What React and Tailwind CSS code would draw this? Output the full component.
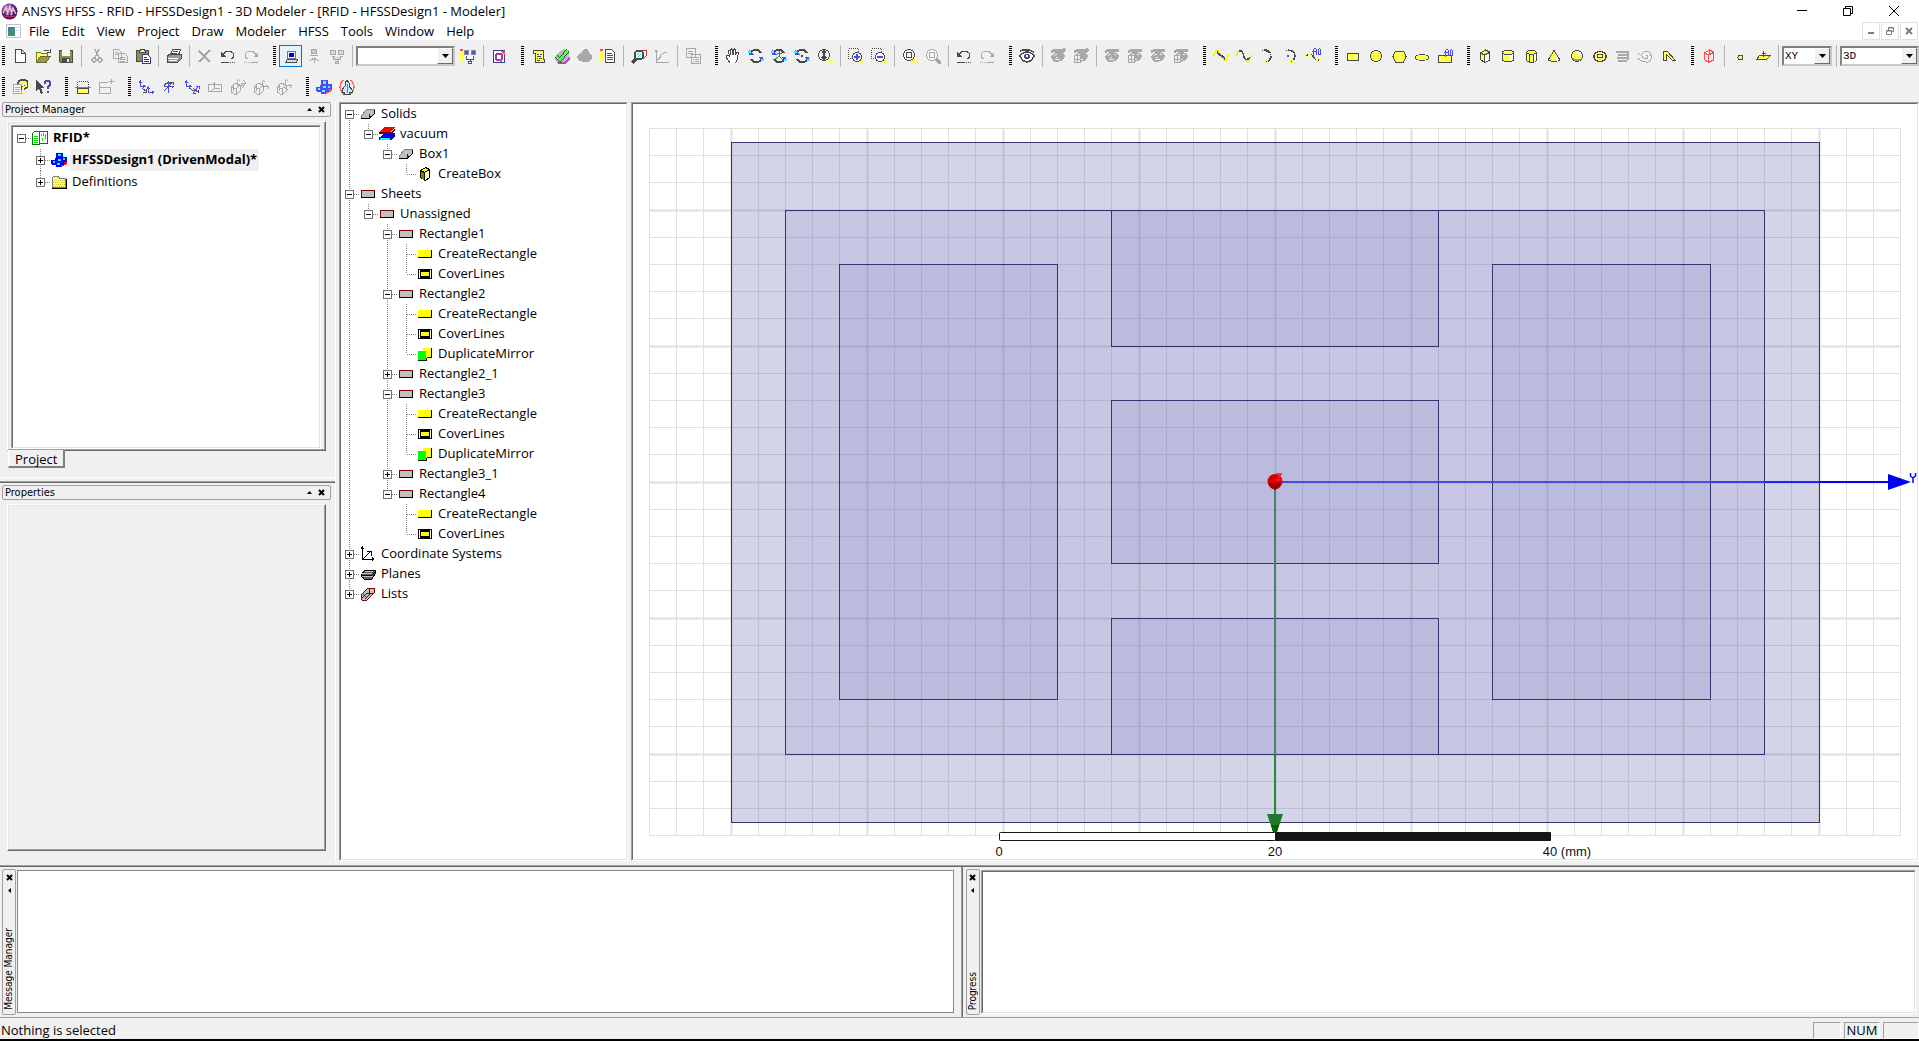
import React, { useState } from 'react';

const D = '#4a4a4a';
const G = '#a8a8a8';
const Y = '#ffff4d';
const B = '#4a4aff';

const maskedEye = (box, slash) => (
    <>
        <path d="M1 3q1-2 5-2h9v3h-3q-5-1-11 1z" fill={G} />
        <path d="M1 9q2-5 7-5t7 4q-1 4-4 5t-6 1q-3-1-4-5z" fill={G} />
        <path d="M4 8q1-2 3-2M10 6h2M6 9h2M5 11h5" stroke="#f0f0f0" fill="none" />
        {slash && <path d="M9 7l6-6" stroke={G} strokeWidth="3" />}
        {box && <path d="M1.500 7.500h6v7h-6zM4.500 7.500v7M1.500 11h6" fill="#f0f0f0" stroke={G} />}
    </>
);

const magnifier = (c, handle) => (
    <>
        <path d="M11 11l5 5" stroke={handle} strokeWidth="3" />
        <circle cx="7" cy="7" r="5.500" fill="#f6f6f6" stroke={c} />
    </>
);

const rotateArrows = (
    <>
        <path d="M2 6q1-4 6-4q4 0 5 3M14 10q-1 4-6 4q-4 0-5-3" fill="none" stroke={D} strokeWidth="2" />
        <path d="M1 2v5h5zM15 14v-5h-5z" fill={B} />
        <path d="M0 3h3v2h-3zM13 11h3v2h-3z" fill="#33eeff" />
    </>
);

const axes = (c, x, y) => (
    <path d={`M${x}.5 ${y}.5v-6M${x}.5 ${y}.5h6M${x - 1}.5 ${y - 4}.5l2-2 2 2M${x + 4}.5 ${y - 1}.5l2 2-2 2`} fill="none" stroke={c} />
);

const cube = (
    <path d="M1 8l4-4 5 2v6l-4 4-5-3zM1 8l5 2 4-4M6 10v6M3 6v6" fill="none" stroke={G} />
);

const icons = {
    new: <path d="M3.500 1.500h6l4 4v8.500h-10zM9.500 1.500v4h4" fill="#fff" stroke={D} />,
    open: (
        <>
            <path d="M1.500 13.500v-9h4l1 1h6v3" fill={Y} stroke="#77772a" />
            <path d="M1.500 14l4-6h10l-4 6z" fill="#99994a" stroke="#66662a" />
            <path d="M9 3q3-2 5 0M15 1v3h-3" fill="none" stroke={D} />
        </>
    ),
    save: (
        <>
            <path d="M1.500 2.500h13v12h-12l-1-1z" fill="#8f8f45" stroke={D} />
            <path d="M4 2h8v6h-8z" fill="#f5f5f5" />
            <path d="M4 10h8v4h-8z" fill={D} />
            <path d="M9 11h2v3h-2z" fill="#eee" />
        </>
    ),
    cut: (
        <>
            <path d="M6 1l4 9M10 1l-4 9" stroke={G} fill="none" strokeWidth="1.500" />
            <circle cx="5" cy="12" r="2" fill="none" stroke={G} strokeWidth="1.500" />
            <circle cx="11" cy="12" r="2" fill="none" stroke={G} strokeWidth="1.500" />
        </>
    ),
    copy: <path d="M1.500 1.500h5l3 3v6h-8zM6.500 5.500h6l3 3v6h-9zM3 4.500h3M3 6.500h3M8 9.500h5M8 11.500h6M8 13h5" fill="#f0f0f0" stroke={G} />,
    paste: (
        <>
            <path d="M1.500 2.500h12v11h-12z" fill="#8f8f45" stroke={D} />
            <path d="M4.500 4.500h6l-1-3h-4z" fill={Y} stroke={D} />
            <path d="M7.500 6.500h5l3 3v6h-8zM9 9.500h3M9 11.500h5M9 13.500h5" fill="#fff" stroke="#3a3a90" />
        </>
    ),
    print: (
        <>
            <path d="M4.500 7l2-5.500h8l-2 5.500" fill="#fff" stroke={D} />
            <path d="M1 8l3-2h11v5l-3 3H1z" fill="#999" stroke={D} />
            <path d="M2 10.500h10M3 12.500h8" stroke="#fff" />
            <path d="M7 3.500h5M6 5.500h5" stroke={D} />
        </>
    ),
    del: <path d="M2 3l11 11M13 2L2 14" stroke={G} strokeWidth="2" fill="none" />,
    undo: (
        <>
            <path d="M3 8q1-5 6-5q5 1 5 5q-1 2-3 3" fill="none" stroke={D} />
            <path d="M1 4v5h5z" fill={D} />
            <path d="M1 14h8v1h-8zM10 14h1v1h-1zM12 14h1v1h-1zM14 14h1v1h-1z" fill={D} />
        </>
    ),
    redo: (
        <>
            <path d="M13 8q-1-5-6-5q-5 1-5 5q1 2 3 3" fill="none" stroke={G} />
            <path d="M15 4v5h-5z" fill={G} />
            <path d="M7 14h8v1h-8zM1 14h1v1h-1zM3 14h1v1h-1zM5 14h1v1h-1z" fill={G} />
        </>
    ),
    local: (
        <>
            <path d="M4.500 3.500h8v7h-8z" fill="#f4f4f4" stroke="#777" />
            <path d="M6 5h5v4h-5z" fill="#0000c8" />
            <path d="M2.500 14.500l2-3h10l-1 3z" fill="#ddd" stroke={D} />
        </>
    ),
    remote: <path d="M5.500 1.500h5v4h-5zM4 7.500h8M8.500 10v5M5 12l3-2 3 2M3 13l2-1M13 13l-2-1" fill="#c8c8c8" stroke={G} />,
    distributed: <path d="M1.500 2.500h5v4h-5zM9.500 2.500h5v4h-5zM3 8.500h3M11 8.500h3M4.500 9v2.500h7v-2.500M8.500 11v2M6.500 13.500h3v2h-3z" fill="#d8d8d8" stroke={G} />,
    pencilPcs: (
        <>
            <path d="M0 2h3v10l-1.500 3-1.500-3z" fill={Y} />
            <path d="M0 1h3v2h-3z" fill="#ff4d4d" />
            <path d="M4.500 2.500h4v4h-4zM11.500 2.500h4v4h-4z" fill={B} stroke="#8a8aa0" />
            <path d="M6.500 8v3.500h7v-3.500M10.500 11v2M8.500 13.500h3v2h-3z" fill="#fff" stroke="#4a4a90" />
        </>
    ),
    queue: (
        <>
            <path d="M2.500 2.500h11v12h-11z" fill="#fff" stroke="#3c3c90" />
            <path d="M3 3h6l5 5v-5z" fill="#ff4d4d" />
            <path d="M6 6h4l1 1v4l-1 1h-4l-1-1v-4z" fill="#fff" stroke="#a040a0" strokeWidth="2" />
            <path d="M9 11h2v3h-2z" fill="#ff4d4d" />
        </>
    ),
    scroll: (
        <>
            <path d="M2.500 2.500h10v9h1v3h-9v-9h-2z" fill={Y} stroke={D} />
            <path d="M6 6.500h2M9 6.500h2M6 8.500h4M6 10.500h1M8 10.500h3M6 12.500h3" stroke={D} />
        </>
    ),
    validate: (
        <>
            <path d="M1 9l5-6 4-2 5 3v8l-5 4-8-2z" fill="#b9b9c6" />
            <path d="M2 14h8l6-5v3l-5 4h-7z" fill="#b04ab0" />
            <path d="M2 8l4 4 8-10" fill="none" stroke={D} strokeWidth="4" />
            <path d="M2 8l4 4 8-10" fill="none" stroke="#4dff4d" strokeWidth="2.500" />
        </>
    ),
    analyze: <path d="M5 3l2-2h4l1 4 3 2v4l-4 3h-5l-5-2-1-4 3-3h2z" fill={G} />,
    notes: (
        <>
            <path d="M0 2h3v12h-3z" fill={Y} />
            <path d="M0 1h3v2h-3z" fill="#ff4d4d" />
            <path d="M5.500 1.500h6l3 3v10h-9z" fill="#fff" stroke={D} />
            <path d="M7 5.500h5M7 7.500h6M7 9.500h6M7 11.500h6" stroke="#4a4a90" />
        </>
    ),
    inspect: (
        <>
            <path d="M11 2h4v6l-3 3" fill="#fff" stroke="#b33" />
            <path d="M5 11l-4 4" stroke={D} strokeWidth="3" />
            <circle cx="8" cy="7" r="4.500" fill="#dffcff" stroke={D} strokeWidth="2" />
            <path d="M6 7l2-2M7 9l3-3" stroke="#33dddd" />
        </>
    ),
    plot: <path d="M2.500 2v12.500h12M3 12q3-1 4-5q2-3 6-2M1 4l1-2 2 2" fill="none" stroke={G} />,
    report: <path d="M1.500 .5h9v9h-9zM6.500 6.500h9v9h-9zM3 3.500h5M3 5.500h5M8 9.500h1M10 9.500h4M8 11.500h1M10 11.500h4M8 13.500h1M10 13.500h4" fill="#f0f0f0" stroke={G} />,
    pan: <path d="M5 15l-4-6v-2h2l2 2-2-6 1-1 1 1 1 4-.5-5 1-1 1 1 .5 5 .5-5 1-1 1 1v5l1-3 2 0-1 7-2 4" fill="#fff" stroke={D} />,
    rotate: rotateArrows,
    rotateAxis: (
        <>
            {rotateArrows}
            <path d="M8.500 9V3M6 5.500h5" stroke="#d33" />
            <path d="M8 8l-5 4" stroke="#3a3" />
            <path d="M8 8l4 4" stroke={B} />
        </>
    ),
    rotateScreen: (
        <>
            {rotateArrows}
            <circle cx="8" cy="8" r="1.500" fill={D} />
        </>
    ),
    zoom: (
        <>
            {magnifier(D, Y)}
            <path d="M7 3v8M5 5l2-2 2 2M5 9l2 2 2-2" fill="none" stroke={D} strokeWidth="1.500" />
        </>
    ),
    zoomIn: (
        <>
            <path d="M.5 .5h10v10h-10z" fill="none" stroke={D} strokeDasharray="1 1" />
            <path d="M12 12l4 4" stroke={Y} strokeWidth="3" />
            <circle cx="9" cy="9" r="4.500" fill="#fff" stroke={D} />
            <path d="M9 6v6M6 9h6" stroke={B} strokeWidth="2" />
        </>
    ),
    zoomOut: (
        <>
            <path d="M.5 .5h10v10h-10z" fill="none" stroke={D} strokeDasharray="1 1" />
            <path d="M12 12l4 4" stroke={Y} strokeWidth="3" />
            <circle cx="9" cy="9" r="4.500" fill="#fff" stroke={D} />
            <path d="M6 9h6" stroke={B} strokeWidth="2" />
        </>
    ),
    fitAll: (
        <>
            {magnifier(D, Y)}
            <path d="M4.500 4.500h5v5h-5z" fill="none" stroke={D} />
        </>
    ),
    fitSel: (
        <>
            {magnifier(G, G)}
            <path d="M4.500 4.500h5v5h-5z" fill="none" stroke={G} />
        </>
    ),
    eye: (
        <>
            <path d="M1 3q7-3 14 1" fill="none" stroke={D} strokeWidth="1.500" />
            <path d="M1 8q3-4 7-4t7 4q-3 6-7 6t-7-6z" fill="#fff" stroke={D} strokeWidth="1.500" />
            <circle cx="8" cy="8.500" r="3" fill="#4a4a90" />
            <path d="M7 7h2v2h-2z" fill="#fff" />
        </>
    ),
    hideSel: maskedEye(false, true),
    hideSelView: maskedEye(true, true),
    showSel: maskedEye(false, false),
    showSelView: maskedEye(true, false),
    line: (
        <>
            <path d="M4 4l8 7" stroke={D} strokeWidth="2" />
            <path d="M0 6h2v2h-2zM1 4h2v2h-2zM2 2h4v1h-4zM5 3h1v2h-1zM10 10h1v3h-1zM11 12h3v1h-3zM13 10h2v2h-2zM14 6h2v3h-2z" fill="#f4f400" />
        </>
    ),
    spline: (
        <>
            <path d="M1 6q2-4 4-3q2 1 3 6q2 5 7 0" fill="none" stroke={D} strokeWidth="1.500" />
            <path d="M0 5h2v3h-2zM1 3h2v2h-2zM3 1h3v1h-3zM10 12h4v2h-4zM14 7h2v3h-2z" fill="#f4f400" />
        </>
    ),
    arc: (
        <>
            <path d="M4 2q8 0 8 6q-1 5-4 6" fill="none" stroke={D} strokeWidth="2" />
            <path d="M2 1h3v3h-3zM10 5h3v3h-3zM6 12h3v3h-3z" fill={Y} />
            <path d="M3 2h1v1h-1zM11 6h1v1h-1zM7 13h1v1h-1z" fill={D} />
        </>
    ),
    arcCenter: (
        <>
            <path d="M5 2q8 0 8 6q-1 5-4 6" fill="none" stroke={D} strokeWidth="1.500" />
            <path d="M3 1h3v3h-3zM8 12h4v3h-4z" fill={Y} />
            <path d="M4 2h1v1h-1zM9 13h1v1h-1z" fill={D} />
            <path d="M5 7h2v2h-2z" fill={B} />
        </>
    ),
    eqCurve: (
        <>
            <path d="M1 9q2-4 5-3l5 6q2 1 4-1" fill="none" stroke={D} />
            <path d="M0 8h2v3h-2zM3 5h3v2h-3zM11 12h2v2h-2zM14 10h2v3h-2z" fill={Y} />
            <path d="M10.500 .5h-1l-1 1v6M7 3.500h4M11.500 1v6M14.500 .5l1 1v4l-1 2M13.500 1v6" fill="none" stroke={B} />
        </>
    ),
    rect: <path d="M2.500 5.500h11v7h-11z" fill={Y} stroke={D} />,
    circle: <circle cx="8" cy="8" r="5.500" fill={Y} stroke={D} />,
    polygon: <path d="M4.500 3h8l2.500 5.500-2.500 5.500h-8l-2.500-5.500z" fill={Y} stroke={D} />,
    ellipse: <ellipse cx="8" cy="9.500" rx="6.500" ry="3" fill={Y} stroke={D} />,
    eqSurface: (
        <>
            <path d="M1.500 7.500h13v7h-13z" fill={Y} stroke={D} />
            <path d="M10.500 1.500h-1l-1 1v6M7 4.500h4M11.500 2v6M14.500 1.500l1 1v4l-1 2M13.500 2v6" fill="none" stroke={B} />
        </>
    ),
    box: (
        <>
            <path d="M3.500 5l5-3 4 2v8l-5 2.500-4-3z" fill={Y} stroke={D} />
            <path d="M8 7l4-2v7l-4 2z" fill="#fff" />
            <path d="M3.500 5l4 2 5-2.500M7.500 7v7.500" fill="none" stroke={D} />
        </>
    ),
    cylinder: (
        <>
            <path d="M2.500 4.500v8q5 3 11 0v-8" fill={Y} stroke={D} />
            <path d="M10 6h3v6h-3z" fill="#fff" />
            <ellipse cx="8" cy="4.500" rx="5.500" ry="2" fill={Y} stroke={D} />
        </>
    ),
    prism: (
        <>
            <path d="M3.500 4.500v8l3 2h4l3-2v-8l-2-2h-6z" fill={Y} stroke={D} />
            <path d="M11 6h2v6l-2 2z" fill="#fff" />
            <path d="M3.500 4.500l3 2h4l3-2M6.500 6.500v8M10.500 6.500v8" fill="none" stroke={D} />
        </>
    ),
    cone: (
        <>
            <path d="M8 2.500l6 9.500q-6 3-12 0z" fill={Y} stroke={D} />
            <path d="M9 5l4 7-3 1z" fill="#fff" />
        </>
    ),
    sphere: (
        <>
            <circle cx="8" cy="8" r="5.500" fill={Y} stroke={D} />
            <path d="M4 12q4 2 8 0l1-2q-5 3-9 0z" fill="#999" />
            <path d="M9 4h3v3h-3z" fill="#fff" />
        </>
    ),
    torus: (
        <>
            <ellipse cx="8" cy="8.500" rx="6" ry="5" fill={Y} stroke={D} strokeWidth="1.500" />
            <path d="M5.500 6.500h5v3h-5z" fill="#fff" stroke={D} />
        </>
    ),
    helix: <path d="M1 4h11M3 7h11M2 10h12M3 13h9M13 3v9" stroke={G} strokeWidth="2" fill="none" />,
    spiral: <path d="M8 8q2-2 2 1t-4 1t-1-5t6-1t2 7t-9 2t-2-8" fill="none" stroke={G} />,
    bondwire: <path d="M2.500 12.500v-9h4l8 9h-3l-6-6v6z" fill={Y} stroke={D} />,
    redCube: <path d="M3.500 5l5-3 4 2v8l-5 2.500-4-3zM3.500 5l4 2 5-2.500M7.500 7v7.500M8.500 2v4" fill="none" stroke="#ff4d4d" />,
    point: <circle cx="8.500" cy="9.500" r="2.500" fill={Y} stroke={D} />,
    plane: (
        <>
            <path d="M4.500 7.500h11l-4 4h-10z" fill={Y} stroke={D} />
            <path d="M8.500 3v6M7 5.500h4" stroke={D} />
        </>
    ),
    help: (
        <>
            <path d="M1.500 5.500h8v9h-8zM3 8.500h5M3 10.500h5M3 12.500h5" fill="#fff" stroke={G} />
            <path d="M7 5q0-3 4-3t4 3q0 3-4 4v2" fill="none" stroke={D} strokeWidth="4" />
            <path d="M7.500 5q0-2.500 3.500-2.500t3.500 2.500q0 2.500-3.500 3.500v2M11 13v2" fill="none" stroke={Y} strokeWidth="2" />
        </>
    ),
    contextHelp: (
        <>
            <path d="M1 1v11l3-2 2 5 2-1-2-5h4z" fill={D} />
            <path d="M9.500 5q0-3 3-3t3 3q-1 2-3 3v2M12.500 12v2" fill="none" stroke="#4a4aa8" strokeWidth="2" />
        </>
    ),
    clip: (
        <>
            <path d="M2.500 7.500v-5h11v5" fill="none" stroke={D} strokeDasharray="1 1" />
            <path d="M2.500 9.500h11v5h-11z" fill={Y} stroke={D} />
            <path d="M0 8.500h16" stroke="#3cb43c" />
        </>
    ),
    clipAdd: <path d="M1.500 8v-4.500h8M1.500 8.500h11v6h-11zM13.500 0v5M11 2.500h5" fill="none" stroke={G} />,
    csMove: (
        <>
            <path d="M2.500 8V2M2 7.500h5M1 4l1.500-2 1.500 2M5 6l2 1.500-2 1.500" fill="none" stroke={B} />
            <path d="M10.500 14V8M10 13.500h6M9 10l1.500-2 1.500 2M14 12l2 1.500-2 1.500" fill="none" stroke={B} />
            <path d="M4 9l5 4M8 10v3h-3" fill="none" stroke={D} />
        </>
    ),
    csRotate: (
        <>
            <path d="M7.500 14V3M3 7.500h10M6 5l1.500-2 1.500 2" fill="none" stroke={B} strokeWidth="1.500" />
            <path d="M3 12l9-9M12 6v-3h-3M11 9l2-2M5 4l-2 3" fill="none" stroke={D} />
        </>
    ),
    csBoth: (
        <>
            <path d="M2.500 8V2M2 7.500h5M1 4l1.500-2 1.500 2M5 6l2 1.500-2 1.500" fill="none" stroke={B} />
            <path d="M9 9l6 5M15 7l-6 7M12 7h3v3" stroke={B} fill="none" />
            <path d="M5 9l5 3M9 14h3M14 11v3" stroke={D} fill="none" />
        </>
    ),
    csFace: <path d="M1.500 5.500h13v7h-13zM7.500 9.500v-5M7.500 9.500h5M7.500 9.500l-3 2M6 6l1.500-2 1.500 2" fill="none" stroke={G} />,
    csObj: <>{cube}{axes(G, 7, 6)}<path d="M11 4h5M13 1l3 3-2 2" stroke={G} fill="none" /></>,
    csObjMove: <>{cube}{axes(G, 9, 7)}</>,
    csObjBoth: <>{cube}{axes(G, 9, 6)}<path d="M7 8l5 3" stroke={G} /></>,
    hfss: (
        <>
            <path d="M3 11l3 4h4l6-3v-3l-4-1z" fill="#ff4d4d" />
            <path d="M5 1h7v4h3l1 1v4h-3v3h-3v2h-5v-2h-4l-1-1v-4h4l1-3z" fill={B} />
            <path d="M7 2h3v3h-3zM2 9h2v2h-2zM7 7h3v2h-3zM12 7h2v2h-2zM6 11h3v2h-3z" fill="#4dffff" />
        </>
    ),
    antenna: (
        <>
            <path d="M4 1q-6 7 0 14M12 1q6 7 0 14" stroke="#ff6a4d" strokeWidth="1.500" fill="none" />
            <path d="M8 1l2 3v3l3 4v2h-3l1 2h-6l1-2h-3v-2l3-4v-3z" fill="#c8e8ff" stroke={D} />
            <path d="M8.500 5v9" stroke="#4a8ac8" />
        </>
    ),
};

const toolbarRows = [
    [
        ['new', 'open', 'save', '|', 'cut', 'copy', 'paste', '|', 'print', '|', 'del', 'undo', 'redo'],
        ['local*', 'remote', 'distributed', '|', 'combo', 'pencilPcs', '|', 'queue'],
        ['scroll', 'validate', 'analyze', 'notes', '|', 'inspect', 'plot', '|', 'report'],
        ['pan', 'rotate', 'rotateAxis', 'rotateScreen', 'zoom', '|', 'zoomIn', 'zoomOut', '|', 'fitAll', 'fitSel', '|', 'undo', 'redo'],
        ['eye', '|', 'hideSel', 'hideSelView', '|', 'showSel', 'showSelView', 'showSel', 'showSelView'],
        ['line', 'spline', 'arc', 'arcCenter', 'eqCurve'],
        ['rect', 'circle', 'polygon', 'ellipse', 'eqSurface'],
        ['box', 'cylinder', 'prism', 'cone', 'sphere', 'torus', 'helix', 'spiral', 'bondwire'],
        ['redCube', '|', 'point', 'plane', '|', 'planeSelect', '|', 'dimSelect'],
    ],
    [
        ['help', 'contextHelp'],
        ['clip', 'clipAdd'],
        ['csMove', 'csRotate', 'csBoth', 'csFace', 'csObj', 'csObjMove', 'csObjBoth'],
        ['hfss', 'antenna'],
    ],
];

const menus = ['File', 'Edit', 'View', 'Project', 'Draw', 'Modeler', 'HFSS', 'Tools', 'Window', 'Help'];

const op = (label, icon) => ({ label, icon });
const rectangle = (label, mirrored) => ({
    label,
    icon: 'sheet',
    children: [
        op('CreateRectangle', 'createRect'),
        op('CoverLines', 'cover'),
        ...(mirrored ? [op('DuplicateMirror', 'mirror')] : []),
    ],
});

const modelTree = [
    {
        label: 'Solids',
        icon: 'solid',
        children: [
            {
                label: 'vacuum',
                icon: 'material',
                children: [{ label: 'Box1', icon: 'solid', children: [op('CreateBox', 'createBox')] }],
            },
        ],
    },
    {
        label: 'Sheets',
        icon: 'sheet',
        children: [
            {
                label: 'Unassigned',
                icon: 'sheet',
                children: [
                    rectangle('Rectangle1', false),
                    rectangle('Rectangle2', true),
                    { label: 'Rectangle2_1', icon: 'sheet', closed: true },
                    rectangle('Rectangle3', true),
                    { label: 'Rectangle3_1', icon: 'sheet', closed: true },
                    rectangle('Rectangle4', false),
                ],
            },
        ],
    },
    { label: 'Coordinate Systems', icon: 'cs', closed: true },
    { label: 'Planes', icon: 'planes', closed: true },
    { label: 'Lists', icon: 'lists', closed: true },
];

const projectTree = [
    {
        label: 'RFID*',
        icon: 'project',
        bold: true,
        children: [
            { label: 'HFSSDesign1 (DrivenModal)*', icon: 'design', bold: true, active: true, closed: true },
            { label: 'Definitions', icon: 'folder', closed: true },
        ],
    },
];

const treeIcons = {
    solid: (
        <>
            <path d="M1.500 12.500v-3l5-6h8v4l-5 5z" fill="#c0c0c0" stroke="#808080" />
            <path d="M1 12.500h8l5.500-5v-4" fill="none" stroke="#000" />
            <path d="M9.500 12v-4" fill="none" stroke="#800000" />
        </>
    ),
    material: (
        <>
            <path d="M1 5l4-4h11l-4 5h-11z" fill="#f00" />
            <path d="M0 6h12l4-4v2l-4 4h-12z" fill="#600000" />
            <path d="M1 11l4-4h11l-4 4z" fill="#00f" />
            <path d="M0 11h12l4-4v3l-4 4h-12z" fill="#000080" />
            <path d="M1 11.500h10v2h-10z" fill="#0ff" />
        </>
    ),
    sheet: (
        <>
            <path d="M1.500 4.500h13v7h-13z" fill="#c0c0c0" stroke="#800000" />
            <path d="M1 11.500h13.500v-7" fill="none" stroke="#000" />
        </>
    ),
    createRect: (
        <>
            <path d="M1 4h13v7h-13z" fill="#ff0" />
            <path d="M1 11.500h13.500v-8" fill="none" stroke="#000" />
        </>
    ),
    cover: (
        <>
            <path d="M1.500 3.500h13v9h-13z" fill="#fff" stroke="#000" />
            <path d="M3 4.500h10M3 11.500h10" stroke="#000" />
            <path d="M3.500 5.500h9v5h-9z" fill="#ff0" stroke="#000" />
        </>
    ),
    mirror: (
        <>
            <path d="M6 2h8v9h-8z" fill="#ff0" />
            <path d="M14.500 2v9.500h-5" fill="none" stroke="#000" />
            <path d="M1 5h8v9h-8z" fill="#0f0" />
            <path d="M1 14.500h8.500v-3" fill="none" stroke="#000" />
        </>
    ),
    createBox: (
        <>
            <path d="M3.500 4.500l5-3 4 2v8l-4 3-5-3z" fill="#ff0" stroke="#000" />
            <path d="M4 5l3 2v7l-3-2z" fill="#808000" />
            <path d="M8 7l4-2v6l-4 3z" fill="#ffffc0" />
            <path d="M3.500 4.500l4 2 5-3M7.500 6.500v8" fill="none" stroke="#000" />
        </>
    ),
    cs: <path d="M2.500 1v12.500h11M1 3l1.500-2 1.500 2M12 11.500l2 1.500-2 1.500M3 13l7-7M7 5.500h4.500v4" fill="none" stroke="#000" />,
    planes: (
        <>
            <path d="M1 9l4-5h10v4l-3 5h-8z" fill="#606060" stroke="#000" />
            <path d="M2 7.500h10M2 10.500h11M5 5.500h8" stroke="#c0c0c0" />
            <path d="M1 9h11l3-3" stroke="#000" fill="none" />
        </>
    ),
    lists: (
        <>
            <path d="M1 9l7-7h6v5l-7 7h-5z" fill="#c0c0c0" stroke="#800000" />
            <path d="M2 12l5-5h3M5 13l6-6M9 3v4h5M3 8l3 3" fill="none" stroke="#800000" />
        </>
    ),
    project: (
        <>
            <path d="M5.500 1.500h10v12h-10z" fill="#fff" stroke="#008000" />
            <path d="M.5 3.500l2-2h5v13h-7z" fill="#fff" stroke="#008000" />
            <path d="M2 6.500h4M2 8.500h4M2 10.500h4M2 12.500h4M9.500 4v2M11.500 3v3M13.500 4v5M10.500 8v3" stroke="#00e000" fill="none" />
        </>
    ),
    design: (
        <>
            <path d="M3 11l3 4h4l6-3v-3l-4-1z" fill="#f00" />
            <path d="M5 1h7v4h3l1 1v4h-3v3h-3v2h-5v-2h-4l-1-1v-4h4l1-3z" fill="#00f" />
            <path d="M7 2h3v2h-3zM2 9h2v2h-2zM7 7h3v2h-3zM12 6h2v2h-2zM6 11h3v2h-3z" fill="#0ff" />
        </>
    ),
    folder: (
        <>
            <path d="M1.500 13.500v-10l1-1h5l1 2h6v9z" fill="#ffff66" stroke="#808080" />
            <path d="M1 14.500h14.500v-10" fill="none" stroke="#000" />
            <path d="M3 6.500h11M2 8.500h11M3 10.500h11M2 12.500h11" stroke="#d0c040" strokeDasharray="1 1" />
        </>
    ),
};

const Glyph = ({ children }) => (
    <svg width="16" height="16" viewBox="0 0 16 16" className="shrink-0" shapeRendering="crispEdges">
        {children}
    </svg>
);

/* Two pixel bevels used all over the window */
const Sunken = ({ className = '', children }) => (
    <div className={`flex border border-t-[#a0a0a0] border-l-[#a0a0a0] border-r-white border-b-white ${className}`}>
        <div className="flex-1 min-w-0 min-h-0 border border-t-[#696969] border-l-[#696969] border-r-[#e3e3e3] border-b-[#e3e3e3] bg-white overflow-hidden">
            {children}
        </div>
    </div>
);

const Raised = ({ className = '', children }) => (
    <div className={`flex border border-t-white border-l-white border-r-[#696969] border-b-[#696969] ${className}`}>
        <div className="flex flex-1 min-w-0 min-h-0 border border-t-[#e3e3e3] border-l-[#e3e3e3] border-r-[#a0a0a0] border-b-[#a0a0a0]">
            {children}
        </div>
    </div>
);

const Combo = ({ label, options, className }) => (
    <div className={`relative h-5 shrink-0 border-2 border-t-[#808080] border-l-[#808080] border-r-[#c8c8c8] border-b-[#c8c8c8] bg-white ${className}`}>
        <select aria-label={label} className="block w-full h-full appearance-none bg-white pl-px font-['Liberation_Mono',monospace] text-[11px] leading-4 outline-none">
            {options.map((o) => <option key={o}>{o}</option>)}
        </select>
        <span className="absolute right-0 top-0 bottom-0 w-4 flex items-center justify-center pointer-events-none bg-[#f0f0f0] border border-t-white border-l-white border-r-[#696969] border-b-[#696969]">
            <svg width="7" height="4" viewBox="0 0 7 4"><path d="M0 0h7L3.500 4z" /></svg>
        </span>
    </div>
);

const ToolItem = ({ name }) => {
    if (name === '|') return <span className="w-2 flex justify-center"><span className="w-px h-[22px] bg-[#b4b4b4]" /></span>;
    if (name === 'combo') return <Combo label="Queue" options={['']} className="w-[99px] mr-px" />;
    if (name === 'planeSelect') return <Combo label="Drawing plane" options={['XY', 'YZ', 'XZ']} className="w-[50px]" />;
    if (name === 'dimSelect') return <Combo label="Movement mode" options={['3D', 'In Plane']} className="w-[79px]" />;
    const pressed = name.endsWith('*');
    const key = pressed ? name.slice(0, -1) : name;
    return (
        <button
            type="button"
            aria-label={key}
            aria-pressed={pressed}
            className={`w-[23px] h-[22px] shrink-0 flex items-center justify-center ${pressed ? 'bg-[#e5f1fb] border border-[#0078d7]' : 'hover:bg-[#e0eef9]'}`}
        >
            <Glyph>{icons[key]}</Glyph>
        </button>
    );
};

const Grip = () => (
    <span className="w-2 h-5 shrink-0 flex flex-col gap-px pl-0.5">
        {Array.from({ length: 10 }, (_, i) => <span key={i} className="w-[3px] h-px bg-black" />)}
    </span>
);

const Toolbars = () => (
    <div className="bg-[#f0f0f0]">
        {toolbarRows.map((groups, r) => (
            <div key={r} className="h-[31px] flex items-center gap-[9px] overflow-hidden">
                {groups.map((items, g) => (
                    <div key={g} role="toolbar" className="flex items-center shrink-0">
                        <Grip />
                        {items.map((name, i) => <ToolItem key={i} name={name} />)}
                    </div>
                ))}
            </div>
        ))}
    </div>
);

const Guide = ({ height, up, down, across, sign }) => {
    const mid = height / 2;
    return (
        <svg width="19" height={height} className="shrink-0" shapeRendering="crispEdges">
            <g stroke="#808080" strokeDasharray="1 1" fill="none">
                {up && <path d={`M8.500 0V${mid}`} />}
                {down && <path d={`M8.500 ${mid}V${height}`} />}
                {across && <path d={`M9 ${mid + 0.5}H19`} />}
            </g>
            {sign && (
                <>
                    <rect x="4.500" y={mid - 3.5} width="8" height="8" fill="#fff" stroke="#707070" />
                    <path d={`M6 ${mid + 0.5}h5${sign === '+' ? `M8.500 ${mid - 2}v5` : ''}`} stroke="#000" />
                </>
            )}
        </svg>
    );
};

const TreeRows = ({ nodes, height, rails = [] }) =>
    nodes.map((node, i) => {
        const last = i === nodes.length - 1;
        const sign = node.closed ? '+' : node.children ? '-' : null;
        return (
            <React.Fragment key={node.label}>
                <li className={`flex items-center ${height === 22 ? 'h-[22px]' : 'h-5'}`}>
                    {rails.map((on, r) => <Guide key={r} height={height} up={on} down={on} />)}
                    <Guide height={height} up={rails.length > 0 || i > 0} down={!last} across sign={sign} />
                    <span className="w-[19px] shrink-0"><Glyph>{treeIcons[node.icon]}</Glyph></span>
                    <span className={`px-0.5 pb-0.5 h-full flex items-center whitespace-nowrap text-[13px] ${node.bold ? 'font-bold' : ''} ${node.active ? 'bg-[#efefef]' : ''}`}>
                        {node.label}
                    </span>
                </li>
                {node.children && <TreeRows nodes={node.children} height={height} rails={[...rails, !last]} />}
            </React.Fragment>
        );
    });

const closeGlyph = <svg width="7" height="7" viewBox="0 0 7 7"><path d="M1 1l5 5M6 1L1 6" stroke="#000" strokeWidth="2" /></svg>;

const PanelHeader = ({ title }) => (
    <div className="h-[15px] shrink-0 ml-0.5 mr-1 pl-0.5 pr-[5px] flex items-center gap-1.5 border border-[#a0a0a0] rounded-xs font-['DejaVu_Sans_Condensed','DejaVu_Sans',sans-serif] text-[11px]">
        <h2 className="flex-1">{title}</h2>
        <button type="button" aria-label={`Collapse ${title}`}>
            <svg width="5" height="3" viewBox="0 0 5 3"><path d="M0 3h5L2.500 0z" /></svg>
        </button>
        <button type="button" aria-label={`Close ${title}`}>{closeGlyph}</button>
    </div>
);

const SideStrip = ({ title }) => (
    <div className="w-[14px] shrink-0 flex flex-col items-center gap-[7px] pt-1 pb-1 border border-[#a0a0a0] rounded-xs font-['DejaVu_Sans_Condensed','DejaVu_Sans',sans-serif] text-[10px]">
        <button type="button" aria-label={`Close ${title}`}>{closeGlyph}</button>
        <button type="button" aria-label={`Collapse ${title}`}>
            <svg width="3" height="5" viewBox="0 0 3 5"><path d="M3 0v5L0 2.500z" /></svg>
        </button>
        <h2 className="mt-auto [writing-mode:vertical-rl] rotate-180 leading-3 whitespace-nowrap">{title}</h2>
    </div>
);

// Drawing scale: 13.6 px per mm, origin is the centre of the plate
const MM = 13.6;
const CX = 642;
const CY = 378;

const plates = [
    { y: -40, z: -25, w: 80, h: 50, fill: '#5353a3', alpha: 0.25 },
    { y: -36, z: -20, w: 72, h: 40, fill: '#5050b0', alpha: 0.09 },
    { y: -32, z: -16, w: 16, h: 32, fill: '#5a5abb', alpha: 0.1 },
    { y: 16, z: -16, w: 16, h: 32, fill: '#5a5abb', alpha: 0.1 },
    { y: -12, z: -20, w: 24, h: 10, fill: '#5a5abb', alpha: 0.1 },
    { y: -12, z: -6, w: 24, h: 12, fill: '#5a5abb', alpha: 0.1 },
    { y: -12, z: 10, w: 24, h: 10, fill: '#5a5abb', alpha: 0.1 },
];

const px = (v) => Math.floor(v) + 0.5;

const Viewport = () => {
    const cols = Array.from({ length: 47 }, (_, i) => i - 23);
    const rows = Array.from({ length: 27 }, (_, i) => i - 13);
    const step = MM * 2;
    return (
        <svg viewBox="0 0 1284 755" className="block w-full h-full" role="img" aria-label="Model view">
            <g stroke="#e0e0e0">
                {cols.map((c) => (
                    <path key={c} d={`M${px(CX + c * step)} ${CY - 13 * step}V${CY + 13 * step}`} strokeWidth={c % 5 === 0 ? 2 : 1} />
                ))}
                {rows.map((r) => (
                    <path key={r} d={`M${CX - 23 * step} ${px(CY + r * step)}H${CX + 23 * step}`} strokeWidth={r % 5 === 0 ? 2 : 1} />
                ))}
            </g>
            {plates.map((p, i) => (
                <rect
                    key={i}
                    x={px(CX + p.y * MM)}
                    y={px(CY + p.z * MM)}
                    width={px(CX + (p.y + p.w) * MM) - px(CX + p.y * MM)}
                    height={px(CY + (p.z + p.h) * MM) - px(CY + p.z * MM)}
                    fill={p.fill}
                    fillOpacity={p.alpha}
                    stroke="#37356f"
                />
            ))}
            {/* Y axis */}
            <path d="M642 378H1078" stroke="#4b49e0" strokeWidth="2" />
            <path d="M1078 378H1132" stroke="#3a38e8" strokeWidth="2" />
            <path d="M1132 378H1186" stroke="#2222f4" strokeWidth="2" />
            <path d="M1186 378H1256" stroke="#0000ff" strokeWidth="2" />
            <path d="M1255 370l23 8-23 8z" fill="#0000f0" />
            <path d="M1277.500 369v3l2.500 2v5M1282.500 369v3l-2.500 2" fill="none" stroke="#0000ff" strokeWidth="1.500" />
            {/* X axis, pointing down */}
            <path d="M642 384V650" stroke="#4c8368" strokeWidth="2" />
            <path d="M642 650V711" stroke="#2a8a3c" strokeWidth="2" />
            <path d="M634 710h16l-6 18h-4z" fill="#1f7a2f" />
            <path d="M638 721h8l-2 7h-4z" fill="#006400" />
            {/* Z axis looks at the viewer */}
            <circle cx="642" cy="377.500" r="7.500" fill="#d40000" />
            <path d="M635 379h14l-3 5-4 2-4-2z" fill="#a00000" />
            <path d="M643 370h5l-4 6h5" fill="none" stroke="#ff1a1a" strokeWidth="1.500" />
            {/* Scale bar */}
            <rect x="366.500" y="728.500" width="276" height="8" rx="1" fill="#fff" stroke="#151515" />
            <rect x="642" y="728" width="276" height="9" rx="1" fill="#151515" />
            <g fontFamily="'Liberation Sans', Arial, sans-serif" fontSize="13" fill="#111" textAnchor="middle">
                <text x="366" y="752">0</text>
                <text x="642" y="752">20</text>
                <text x="934" y="752">40 (mm)</text>
            </g>
        </svg>
    );
};

const TitleBar = () => (
    <header className="h-[22px] shrink-0 flex items-center bg-white pl-px pr-0.5">
        <svg width="17" height="17" viewBox="0 0 17 17" className="shrink-0">
            <defs>
                <radialGradient id="ball" cx="35%" cy="30%" r="75%">
                    <stop offset="0" stopColor="#b48ad8" />
                    <stop offset="0.500" stopColor="#5c2a92" />
                    <stop offset="1" stopColor="#2c0a5c" />
                </radialGradient>
            </defs>
            <circle cx="8.500" cy="8.500" r="8" fill="url(#ball)" />
            <path d="M2 10l3-6 2 8M6 12l3-9 2 9M10 12l2-7 3 6" fill="none" stroke="#f4b8d0" strokeWidth="1.500" />
            <path d="M3 13q6 2 11 0" fill="none" stroke="#e03060" />
        </svg>
        <h1 className="flex-1 pl-1 text-[13px] whitespace-nowrap">ANSYS HFSS - RFID - HFSSDesign1 - 3D Modeler - [RFID - HFSSDesign1 - Modeler]</h1>
        <button type="button" aria-label="Minimize" className="w-[46px] h-full flex items-center justify-center">
            <svg width="10" height="10" viewBox="0 0 10 10"><path d="M0 4.500h10" stroke="#000" /></svg>
        </button>
        <button type="button" aria-label="Restore" className="w-[46px] h-full flex items-center justify-center">
            <svg width="10" height="10" viewBox="0 0 10 10"><path d="M.5 2.500h7v7h-7zM2.500 2.500v-2h7v7h-2" fill="none" stroke="#000" /></svg>
        </button>
        <button type="button" aria-label="Close" className="w-[46px] h-full flex items-center justify-center">
            <svg width="10" height="10" viewBox="0 0 10 10"><path d="M0 0l10 10M10 0L0 10" stroke="#000" /></svg>
        </button>
    </header>
);

const MenuBar = () => (
    <nav className="h-[18px] shrink-0 flex items-center bg-white pl-1.5 text-[13px]">
        <svg width="15" height="14" viewBox="0 0 15 14" className="shrink-0 mr-2">
            <path d="M.5 .5h14v13h-14z" fill="#fff" stroke="#c0c0c8" />
            <path d="M2 3h7v9h-7z" fill="#3f8f7c" />
            <path d="M2 3h4v5h-4z" fill="#4a78a8" />
            <path d="M10 3h3v1h-3zM10 6h3v1h-3z" fill="#c8d4e8" />
        </svg>
        <div className="flex flex-1 gap-3">
            {menus.map((m) => <button key={m} type="button">{m}</button>)}
        </div>
        <div className="flex gap-px pr-px self-stretch">
            <button type="button" aria-label="Minimize document" className="w-[18px] border border-[#e0e0e0] flex items-center justify-center">
                <svg width="8" height="8" viewBox="0 0 8 8"><path d="M1 6h6" stroke="#71808f" strokeWidth="2" /></svg>
            </button>
            <button type="button" aria-label="Restore document" className="w-[18px] border border-[#e0e0e0] flex items-center justify-center">
                <svg width="8" height="8" viewBox="0 0 8 8"><path d="M.5 3.500h5v4h-5zM.5 4h5M2.500 3v-2.500h5v4h-2M2.500 1h5" fill="none" stroke="#71808f" /></svg>
            </button>
            <button type="button" aria-label="Close document" className="w-[18px] border border-[#e0e0e0] flex items-center justify-center">
                <svg width="8" height="8" viewBox="0 0 8 8"><path d="M1 1l6 6M7 1L1 7" stroke="#71808f" strokeWidth="2" /></svg>
            </button>
        </div>
    </nav>
);

const LeftDock = () => (
    <aside className="w-[336px] shrink-0 flex flex-col border-r border-white">
        <section className="h-[375px] shrink-0 flex flex-col">
            <PanelHeader title="Project Manager" />
            <Raised className="ml-[7px] mr-[9px] mt-1 h-[330px]">
                <Sunken className="flex-1 m-0.5 mr-[3px] mb-0">
                    <ul><TreeRows nodes={projectTree} height={22} /></ul>
                </Sunken>
            </Raised>
            <div role="tablist" className="flex -mt-px ml-2">
                <button type="button" role="tab" aria-selected="true" className="relative h-[18px] px-1.5 pt-0.5 flex items-center text-[13px] bg-[#f0f0f0] border-l border-l-white border-r-2 border-b-2 border-r-[#808080] border-b-[#808080]">
                    Project
                </button>
            </div>
        </section>
        <div className="h-1 border-t border-white" />
        <section className="flex-1 flex flex-col">
            <div className="h-px bg-[#a0a0a0]" />
            <div className="h-px bg-[#696969] mb-0.5" />
            <PanelHeader title="Properties" />
            <Raised className="flex-1 ml-[7px] mr-[9px] mt-1 mb-[10px]" />
        </section>
    </aside>
);

const App = () => {
    const [status] = useState('Nothing is selected');

    return (
        <div className="h-screen flex flex-col bg-[#f0f0f0] text-black font-['Open_Sans','Noto_Sans',sans-serif] leading-none overflow-hidden">
            <TitleBar />
            <MenuBar />
            <Toolbars />

            <main className="flex-1 min-h-0 flex pb-1">
                <LeftDock />
                <Sunken className="w-[289px] shrink-0 ml-[3px]">
                    <ul><TreeRows nodes={modelTree} height={20} /></ul>
                </Sunken>
                <Sunken className="flex-1 min-w-0 ml-[3px]">
                    <Viewport />
                </Sunken>
            </main>

            <div className="h-px shrink-0 bg-[#a0a0a0]" />
            <div className="h-px shrink-0 bg-[#696969]" />
            <section className="h-[150px] shrink-0 flex">
                <div className="w-1/2 shrink-0 flex gap-px pl-0.5 pr-1.5 py-0.5">
                    <SideStrip title="Message Manager" />
                    <div className="flex-1 mt-px mb-0.5 border border-[#828790] bg-white" />
                </div>
                <div className="w-px ml-px bg-[#a0a0a0]" />
                <div className="w-px bg-[#696969]" />
                <div className="flex-1 flex gap-px pl-[3px] pr-[3px] py-0.5">
                    <SideStrip title="Progress" />
                    <Sunken className="flex-1 mt-px mb-px" />
                </div>
            </section>

            <footer className="h-[22px] shrink-0 flex items-center border-t border-[#a0a0a0] pl-px text-[13px]">
                <p className="flex-1 pt-1">{status}</p>
                <div className="flex gap-[3px] h-[17px] self-end">
                    <span className="w-7 border border-t-[#a0a0a0] border-l-[#a0a0a0] border-r-white border-b-white" />
                    <span className="w-9 flex items-center justify-center border border-t-[#a0a0a0] border-l-[#a0a0a0] border-r-white border-b-white">NUM</span>
                    <span className="w-9 border border-t-[#a0a0a0] border-l-[#a0a0a0] border-r-white border-b-white" />
                </div>
            </footer>
            <div className="h-0.5 shrink-0 bg-black" />
        </div>
    );
};

export default App;
